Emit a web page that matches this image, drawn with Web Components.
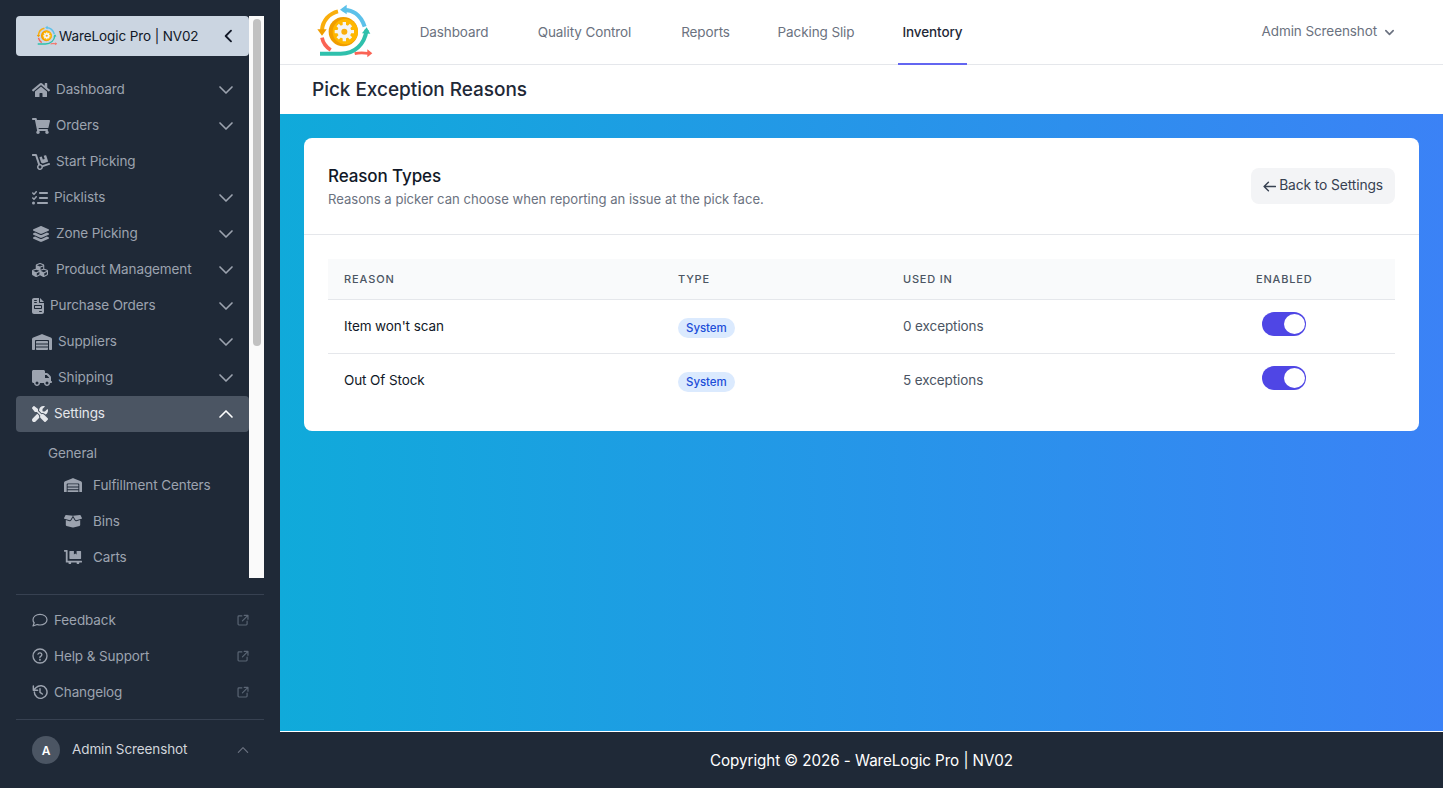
<!DOCTYPE html>
<html><head><meta charset="utf-8"><style>
html,body{margin:0;height:100%;overflow:hidden;font-family:Inter,"Liberation Sans",sans-serif;background:#fff;letter-spacing:-.1px}
body{display:flex;width:1443px;height:788px}
</style></head><body>
<wl-sidebar></wl-sidebar>
<wl-main></wl-main>
<script>
const ICON={
home:[576,512,'M280.37 148.26L96 300.11V464a16 16 0 0 0 16 16l112.06-.29a16 16 0 0 0 15.92-16V368a16 16 0 0 1 16-16h64a16 16 0 0 1 16 16v95.64a16 16 0 0 0 16 16.05L464 480a16 16 0 0 0 16-16V300L295.67 148.26a12.19 12.19 0 0 0-15.3 0zM571.6 251.47L488 182.56V44.05a12 12 0 0 0-12-12h-56a12 12 0 0 0-12 12v72.61L318.47 43a48 48 0 0 0-61 0L4.34 251.47a12 12 0 0 0-1.6 16.9l25.5 31A12 12 0 0 0 45.15 301l235.22-193.74a12.19 12.19 0 0 1 15.3 0L530.9 301a12 12 0 0 0 16.9-1.6l25.5-31a12 12 0 0 0-1.7-16.93z'],
cart:[576,512,'M528.12 301.319l47.273-208C578.806 78.301 567.391 64 551.99 64H159.208l-9.166-44.81C147.758 8.021 137.93 0 126.529 0H24C10.745 0 0 10.745 0 24v16c0 13.255 10.745 24 24 24h69.883l70.248 343.435C147.325 417.1 136 435.222 136 456c0 30.928 25.072 56 56 56s56-25.072 56-56c0-15.674-6.447-29.835-16.824-40h209.647C430.447 426.165 424 440.326 424 456c0 30.928 25.072 56 56 56s56-25.072 56-56c0-22.172-12.888-41.332-31.579-50.405l5.517-24.276c3.413-15.018-8.002-29.319-23.403-29.319H218.117l-6.545-32h293.145c11.206 0 20.92-7.754 23.403-18.681z'],
dolly:[576,512,'M294.2 277.7c18 5 34.7 13.4 49.5 24.7l161.5-53.8c8.4-2.8 12.9-11.9 10.1-20.2L454.9 47.2c-2.8-8.4-11.9-12.9-20.2-10.1l-61.1 20.4 33.1 99.4L346 177l-33.1-99.4-61.6 20.5c-8.4 2.8-12.9 11.9-10.1 20.2l53 159.4zm281 48.7L565 296c-2.8-8.4-11.9-12.9-20.2-10.1l-213.5 71.2c-17.2-22-43.6-36.4-73.5-37L158.4 21.9C154 8.8 141.8 0 128 0H16C7.2 0 0 7.2 0 16v32c0 8.8 7.2 16 16 16h88.9l92.2 276.7c-26.1 20.4-41.7 53.6-36 90.5 6.1 39.4 37.9 72.3 77.3 79.2 60.2 10.7 112.3-34.8 113.4-92.6l213.3-71.2c8.3-2.8 12.9-11.8 10.1-20.2zM256 464c-26.5 0-48-21.5-48-48s21.5-48 48-48 48 21.5 48 48-21.5 48-48 48z'],
list:[512,512,'M152.1 38.2c9.9 8.9 10.7 24 1.8 33.9l-72 80c-4.4 4.9-10.6 7.8-17.2 7.9s-12.900-2.400-17.600-7L7 113C-2.300 103.600-2.300 88.400 7 79s24.600-9.400 33.900 0l22.100 22.100 55.100-61.200c8.900-9.900 24-10.700 33.900-1.800zm0 160c9.900 8.900 10.700 24 1.800 33.900l-72 80c-4.400 4.900-10.600 7.800-17.200 7.900s-12.900-2.400-17.600-7L7 273c-9.400-9.400-9.400-24.600 0-33.900s24.600-9.400 33.900 0l22.100 22.100 55.100-61.200c8.900-9.900 24-10.700 33.900-1.800zM224 96c0-17.700 14.300-32 32-32H480c17.700 0 32 14.300 32 32s-14.300 32-32 32H256c-17.700 0-32-14.300-32-32zm0 160c0-17.700 14.300-32 32-32H480c17.700 0 32 14.300 32 32s-14.300 32-32 32H256c-17.700 0-32-14.300-32-32zM160 416c0-17.700 14.300-32 32-32H480c17.700 0 32 14.300 32 32s-14.300 32-32 32H192c-17.700 0-32-14.300-32-32zM48 368a48 48 0 1 1 0 96 48 48 0 1 1 0-96z'],
layers:[576,512,'M264.5 5.2c14.9-6.9 32.1-6.9 47 0l218.600 101c8.500 3.900 13.900 12.400 13.900 21.800s-5.400 17.900-13.900 21.800l-218.600 101c-14.900 6.900-32.100 6.900-47 0L45.900 149.800C37.400 145.800 32 137.300 32 128s5.400-17.900 13.900-21.800L264.500 5.200zM476.900 209.600l53.200 24.600c8.500 3.900 13.900 12.400 13.900 21.800s-5.400 17.900-13.900 21.800l-218.600 101c-14.900 6.900-32.100 6.900-47 0L45.900 277.800C37.400 273.800 32 265.300 32 256s5.400-17.900 13.900-21.800l53.200-24.600 152 70.200c23.400 10.800 50.400 10.800 73.800 0l152-70.200zm-152 198.200l152-70.200 53.200 24.600c8.500 3.900 13.900 12.400 13.900 21.800s-5.400 17.900-13.900 21.800l-218.600 101c-14.900 6.900-32.100 6.900-47 0L45.900 405.800C37.400 401.800 32 393.300 32 384s5.400-17.900 13.900-21.800l53.200-24.600 152 70.200c23.400 10.800 50.400 10.800 73.800 0z'],
cubes:[576,512,'M488.6 250.2L392 214V105.5c0-15-9.3-28.4-23.4-33.700l-100-37.500c-8.100-3.100-17.100-3.100-25.300 0l-100 37.500c-14.100 5.300-23.400 18.700-23.400 33.700V214l-96.600 36.200C9.300 255.500 0 268.900 0 283.900V394c0 13.600 7.700 26.100 19.900 32.200l100 50c10.100 5.100 22.100 5.100 32.200 0l103.900-52 103.900 52c10.100 5.100 22.100 5.100 32.200 0l100-50c12.200-6.100 19.900-18.600 19.900-32.200V283.900c0-15-9.300-28.400-23.400-33.700zM358 214.800l-85 31.900v-68.200l85-37v73.300zM154 104.100l102-38.200 102 38.200v.6l-102 41.400-102-41.400v-.6zm84 291.100l-85 42.500v-79.100l85-38.800v75.400zm0-112l-102 41.400-102-41.400v-.6l102-38.200 102 38.200v.6zm240 112l-85 42.500v-79.100l85-38.800v75.400zm0-112l-102 41.400-102-41.400v-.6l102-38.200 102 38.200v.6z'],
file:[384,512,'M64 0C28.7 0 0 28.7 0 64V448c0 35.3 28.7 64 64 64H320c35.3 0 64-28.7 64-64V160H256c-17.7 0-32-14.3-32-32V0H64zM256 0V128H384L256 0zM80 64h64c8.8 0 16 7.2 16 16s-7.2 16-16 16H80c-8.800 0-16-7.200-16-16s7.200-16 16-16zm0 64h64c8.800 0 16 7.200 16 16s-7.200 16-16 16H80c-8.800 0-16-7.200-16-16s7.200-16 16-16zm16 96H288c17.700 0 32 14.300 32 32v64c0 17.700-14.300 32-32 32H96c-17.700 0-32-14.300-32-32V256c0-17.700 14.300-32 32-32zm0 32v64H288V256H96zM240 416h64c8.800 0 16 7.200 16 16s-7.200 16-16 16H240c-8.800 0-16-7.200-16-16s7.200-16 16-16z'],
warehouse:[640,512,'M0 488V171.3c0-26.2 15.9-49.7 40.2-59.4L308.1 4.8c7.6-3.1 16.1-3.1 23.8 0L599.800 111.900c24.300 9.700 40.200 33.300 40.200 59.400V488c0 13.300-10.700 24-24 24H568c-13.300 0-24-10.700-24-24V224c0-17.700-14.300-32-32-32H128c-17.700 0-32 14.300-32 32V488c0 13.300-10.700 24-24 24H24c-13.300 0-24-10.700-24-24zm488 24H152c-13.300 0-24-10.700-24-24V432H512v56c0 13.300-10.700 24-24 24zM128 400V336H512v64H128zm0-96V248c0-13.300 10.700-24 24-24H488c13.300 0 24 10.700 24 24v56H128z'],
truck:[640,512,'M48 0C21.5 0 0 21.5 0 48V368c0 26.5 21.5 48 48 48H64c0 53 43 96 96 96s96-43 96-96H384c0 53 43 96 96 96s96-43 96-96h32c17.700 0 32-14.300 32-32s-14.300-32-32-32V288 256 237.300c0-17-6.700-33.300-18.700-45.300L512 114.700c-12-12-28.300-18.700-45.300-18.700H416V48c0-26.500-21.500-48-48-48H48zM416 160h50.700L544 237.300V256H416V160zM112 416a48 48 0 1 1 96 0 48 48 0 1 1 -96 0zm368-48a48 48 0 1 1 0 96 48 48 0 1 1 0-96z'],
tools:[512,512,'M78.6 5C69.1-2.4 55.6-1.5 47 7L7 47c-8.5 8.500-9.400 22-2.100 31.600l80 104c4.500 5.900 11.600 9.400 19 9.400h54.100l109 109c-14.700 29-10 65.400 14.300 89.600l112 112c12.500 12.500 32.800 12.500 45.300 0l64-64c12.500-12.500 12.500-32.800 0-45.300l-112-112c-24.200-24.200-60.600-29-89.600-14.300l-109-109V104c0-7.500-3.500-14.500-9.400-19L78.600 5zM19.900 396.100C7.200 408.800 0 426.100 0 444.100C0 481.600 30.400 512 67.900 512c18 0 35.300-7.200 48-19.900L233.700 374.300c-7.800-20.900-9-43.600-3.500-65.100L169.400 248.500 19.900 396.100zM512 144c0-10.500-1.100-20.700-3.200-30.500c-2.400-11.200-16.100-14.100-24.200-6l-63.900 63.900c-3 3-7.100 4.700-11.300 4.700H352c-8.800 0-16-7.200-16-16V102.600c0-4.200 1.700-8.300 4.700-11.300l63.900-63.900c8.100-8.100 5.200-21.800-6-24.200C388.700 1.100 378.500 0 368 0C288.500 0 224 64.500 224 144l0 .8 85.300 85.300c36-9.100 75.800 .5 104 28.700L429 274.500c49-23 83-72.800 83-130.500z'],
box:[640,512,'M425.7 256c-16.9 0-32.8-9-41.4-23.4L320 126l-64.200 106.600c-8.700 14.500-24.600 23.500-41.500 23.500-4.500 0-9-.6-13.300-1.900L64 215v178c0 14.700 10 27.500 24.200 31l216.200 54.100c10.200 2.500 20.900 2.500 31 0L551.800 424c14.200-3.600 24.200-16.400 24.200-31V215l-137 39.100c-4.300 1.300-8.800 1.900-13.300 1.900zm212.600-112.200L586.800 41c-3.100-6.200-9.800-9.800-16.700-8.900L320 64l91.700 152.100c3.800 6.300 11.400 9.300 18.500 7.300l197.900-56.500c9.900-2.900 14.700-13.900 10.200-23.100zM53.200 41L1.700 143.800c-4.600 9.200.3 20.200 10.100 23l197.900 56.500c7.100 2 14.700-1 18.500-7.300L320 64 69.800 32.100c-6.900-.8-13.500 2.700-16.600 8.900z'],
flatbed:[640,512,'M208 320h384c8.800 0 16-7.200 16-16V48c0-8.800-7.200-16-16-16H448v128l-48-32-48 32V32H208c-8.800 0-16 7.200-16 16v256c0 8.800 7.200 16 16 16zm416 64H128V16c0-8.800-7.200-16-16-16H16C7.200 0 0 7.200 0 16v32c0 8.800 7.200 16 16 16h48v368c0 8.800 7.200 16 16 16h82.900c-1.800 5-2.900 10.400-2.900 16 0 26.500 21.500 48 48 48s48-21.500 48-48c0-5.600-1.200-11-2.900-16H451c-1.800 5-2.900 10.400-2.900 16 0 26.500 21.500 48 48 48s48-21.500 48-48c0-5.600-1.200-11-2.900-16H624c8.800 0 16-7.200 16-16v-32c0-8.800-7.200-16-16-16z']
};
const svg=(n,h=16,w)=>{const[a,b,d]=ICON[n];const W=w||a/b*h;return `<svg width="${W}" height="${h}" viewBox="0 0 ${a} ${b}" preserveAspectRatio="xMinYMid meet" fill="currentColor" style="display:block;flex:none"><path d="${d}"/></svg>`};
const chev=(dir,s,sw)=>`<svg width="${s}" height="${s}" viewBox="0 0 24 24" fill="none" stroke="currentColor" stroke-width="${sw}" stroke-linecap="round" stroke-linejoin="round" style="display:block;flex:none"><path d="${dir=='up'?'M4 16l8-8 8 8':dir=='left'?'M15 4l-8 8 8 8':'M4 8l8 8 8-8'}"/></svg>`;
const stroke=(d,s=16,sw=2,vb=24)=>`<svg width="${s}" height="${s}" viewBox="0 0 ${vb} ${vb}" fill="none" stroke="currentColor" stroke-width="${sw}" stroke-linecap="round" stroke-linejoin="round" style="display:block;flex:none">${d}</svg>`;
const ext=stroke('<path d="M10 5H5a1.5 1.5 0 0 0-1.5 1.5v12.5A1.5 1.5 0 0 0 5 20.500h12.500a1.500 1.500 0 0 0 1.500-1.500v-5M14 4h6.500v6.500M20 4.500l-9 9"/>',14,2);

class WlLogo extends HTMLElement{connectedCallback(){const w=+this.getAttribute('w')||70;const s=this.attachShadow({mode:'open'});
s.innerHTML=`<style>:host{display:block;flex:none}svg{display:block}</style><svg width="${w}" height="${w*64/70}" viewBox="0 0 210 192" fill="none">
<path d="M98 30c28-3 54 14 66 50" stroke="#5cc1ea" stroke-width="12"/><path d="M110 14L90 29l20 14z" fill="#5cc1ea"/>
<path d="M84 34C58 40 38 62 36 90" stroke="#f9ae0c" stroke-width="12"/><path d="M22 88h28l-14 19z" fill="#f09d00"/>
<path d="M36 113c3 16 12 28 26 37" stroke="#fa6354" stroke-width="11"/>
<path d="M30 161h62c42 0 72-28 78-72" stroke="#2fc0ac" stroke-width="12"/><path d="M156 100l14-18 11 19z" fill="#2fc0ac"/>
<path d="M134 161c12-3 26-3 40-1" stroke="#fa6354" stroke-width="8"/><path d="M172 148l15 12-15 12z" fill="#fa6354"/>
<circle cx="100" cy="95" r="44" fill="#f09d00"/><circle cx="106" cy="95" r="38" fill="#ffb700"/>
<g fill="#f4f4f4"><circle cx="103" cy="95" r="21"/><g stroke="#f4f4f4" stroke-width="10"><path d="M103 66v58M74 95h58M83 75l40 40M123 75l-40 40"/></g></g><circle cx="103" cy="95" r="9" fill="#f9ae0c"/></svg>`}}
customElements.define('wl-logo',WlLogo);

class SideItem extends HTMLElement{connectedCallback(){const s=this.attachShadow({mode:'open'});
const ic=this.getAttribute('icon'),c=this.getAttribute('chev'),a=this.hasAttribute('active');
s.innerHTML=`<style>:host{display:flex;align-items:center;height:36px;padding:0 14px 0 16px;box-sizing:border-box;border-radius:4px;gap:6px;font-size:13.500px;color:${a?'#e5e7eb':'#9ca3af'};background:${a?'#4b5563':'none'};flex:none}
span{flex:1;white-space:nowrap;padding-bottom:2px}</style>${svg(ic)}<span><slot></slot></span>${c?`<div style="color:${a?'#fff':'#9ca3af'}">${chev(c,18,2.2)}</div>`:''}`}}
customElements.define('side-item',SideItem);

class SubItem extends HTMLElement{connectedCallback(){const s=this.attachShadow({mode:'open'});
s.innerHTML=`<style>:host{display:flex;align-items:center;height:36px;padding-left:48px;gap:11px;font-size:13.500px;color:#9ca3af;flex:none}
</style>${svg(this.getAttribute('icon'),14.4,18)}<span><slot></slot></span>`}}
customElements.define('sub-item',SubItem);

class LinkItem extends HTMLElement{connectedCallback(){const s=this.attachShadow({mode:'open'});const k=this.getAttribute('svg');
const ic=k==='chat'?stroke('<path d="M12 3.500c5.800 0 10.500 3.500 10.500 8s-4.700 8-10.500 8c-1.500 0-3-.3-4.300-.8L1.500 21l1.800-4.800C2 15 1.500 13.300 1.500 11.500c0-4.500 4.700-8 10.500-8z"/>',16,1.8):k==='help'?stroke('<circle cx="12" cy="12" r="10.500"/><path d="M9 9.200a3 3 0 0 1 5.800 1c0 2-3 2.600-3 4"/><circle cx="11.900" cy="17.600" r=".5"/>',16,2):stroke('<path d="M3.500 12a9.500 9.500 0 1 0 2.800-6.700L2 9.500M2 3v6.500h6.500M12 7v5.500l3.500 2.500"/>',16,2.200);
s.innerHTML=`<style>:host{display:flex;align-items:center;height:36px;padding:0 14px 0 16px;gap:6px;font-size:13.500px;color:#9ca3af;flex:none}
span{flex:1}.e{color:#5b6675}</style>${ic}<span><slot></slot></span><div class="e">${ext}</div>`}}
customElements.define('link-item',LinkItem);

class WlSidebar extends HTMLElement{connectedCallback(){const s=this.attachShadow({mode:'open'});
s.innerHTML=`<style>:host{display:flex;flex-direction:column;width:280px;height:788px;background:#1f2937;flex:none;box-sizing:border-box;padding:16px 16px 0}
.scroll{display:flex;height:562px;flex:none}.col{width:233px;height:562px;overflow:hidden;display:flex;flex-direction:column}
.track{width:15px;background:#fafafa;padding:3px 3px 0 4px;box-sizing:border-box}.thumb{width:8px;height:327px;background:#c1c1c1;border-radius:4px}
.brand{height:40px;flex:none;display:flex;align-items:center;background:#cbd5e1;border-radius:4px;padding:0 12px 0 18px;margin-bottom:16px;font-size:13.500px;color:#111827;white-space:nowrap}
.brand span{flex:1;margin-left:-1px;padding-bottom:1px}
.gen{height:28px;padding:7px 0 0 32px;font-size:13.500px;color:#9ca3af;display:flex;align-items:center;flex:none}
hr{border:0;height:1px;background:#374151;margin:0;flex:none}.h1{margin-top:16px}.links{padding:7px 0 9px;}
.user{display:flex;align-items:center;padding:16px 14px 16px 16px;font-size:13.500px;color:#d1d5db;gap:12px}
.av{width:28px;height:28px;border-radius:50%;background:#4b5563;color:#fff;display:flex;align-items:center;justify-content:center;font-size:12px;font-weight:600}
.user span{flex:1;padding-bottom:2px}.uc{color:#6b7280}
</style>
<div class="scroll"><div class="col">
<div class="brand"><wl-logo w="26"></wl-logo><span>WareLogic Pro | NV02</span>${chev('left',16,2.8)}</div>
<side-item icon="home" chev="down">Dashboard</side-item>
<side-item icon="cart" chev="down">Orders</side-item>
<side-item icon="dolly">Start Picking</side-item>
<side-item icon="list" chev="down">Picklists</side-item>
<side-item icon="layers" chev="down">Zone Picking</side-item>
<side-item icon="cubes" chev="down">Product Management</side-item>
<side-item icon="file" chev="down">Purchase Orders</side-item>
<side-item icon="warehouse" chev="down">Suppliers</side-item>
<side-item icon="truck" chev="down">Shipping</side-item>
<side-item icon="tools" chev="up" active>Settings</side-item>
<div class="gen">General</div>
<sub-item icon="warehouse">Fulfillment Centers</sub-item>
<sub-item icon="box">Bins</sub-item>
<sub-item icon="flatbed">Carts</sub-item>
</div><div class="track"><div class="thumb"></div></div></div>
<hr class="h1"><div class="links"><link-item svg="chat">Feedback</link-item><link-item svg="help">Help &amp; Support</link-item><link-item svg="hist">Changelog</link-item></div><hr>
<div class="user"><div class="av">A</div><span>Admin Screenshot</span><div class="uc">${chev('up',14,2)}</div></div>`}}
customElements.define('wl-sidebar',WlSidebar);

class NavLink extends HTMLElement{connectedCallback(){const s=this.attachShadow({mode:'open'});const a=this.hasAttribute('active');
s.innerHTML=`<style>:host{display:flex;align-items:center;justify-content:center;width:${this.getAttribute('w')}px;height:65px;box-sizing:border-box;font-size:13.500px;color:${a?'#1f2937':'#6b7280'};font-weight:${a?500:400};border-bottom:2px solid ${a?'#6366f1':'transparent'};white-space:nowrap}</style><slot></slot>`}}
customElements.define('nav-link',NavLink);

class RowToggle extends HTMLElement{connectedCallback(){this.attachShadow({mode:'open'}).innerHTML=`<style>:host{display:flex;width:44px;height:24px;box-sizing:border-box;background:#4f46e5;border-radius:12px;padding:2px 1px;justify-content:flex-end}i{display:block;width:21px;height:20px;background:#fff;border-radius:50%}</style><i></i>`}}
customElements.define('row-toggle',RowToggle);

class SysBadge extends HTMLElement{connectedCallback(){this.attachShadow({mode:'open'}).innerHTML=`<style>:host{display:inline-flex;align-items:center;height:20px;padding:0 8px;border-radius:10px;background:#dbeafe;color:#1d4ed8;font-size:11.500px;font-weight:500;letter-spacing:-.05px}</style><slot></slot>`}}
customElements.define('sys-badge',SysBadge);

class ReasonTable extends HTMLElement{connectedCallback(){const r=(n,c)=>`<div class="tr"><div class="c1">${n}</div><div class="c2"><sys-badge>System</sys-badge></div><div class="c3">${c}</div><div class="c4"><div class="w"><row-toggle></row-toggle></div></div></div>`;
this.attachShadow({mode:'open'}).innerHTML=`<style>:host{display:block;padding:24px 24px 24px}
.tr{display:grid;grid-template-columns:350px 225px 337px 1fr;align-items:center;height:54px;border-bottom:1px solid #e5e7eb;box-sizing:border-box}
.tr:last-child{border-bottom:0;height:53px}
.h{height:41px;background:#f9fafb;font-size:11px;font-weight:500;letter-spacing:.8px;color:#4b5563;text-transform:uppercase}
.c1{padding-left:16px;font-size:13.500px;color:#111827;padding-bottom:2px}.h .c1{font-size:11px;color:#4b5563;padding:0 0 0 16px;letter-spacing:.9px}.c2{line-height:0;padding-top:2px}.h .c2{line-height:normal;padding-top:0}.c3{font-size:13.500px;color:#4b5563;padding-bottom:2px}.h .c3{font-size:11px;padding:0}.c4{padding-left:16px}
.w{width:56px;display:flex;justify-content:center;padding-bottom:6px}
</style><div class="tr h"><div class="c1">Reason</div><div class="c2">Type</div><div class="c3">Used In</div><div class="c4">Enabled</div></div>${r("Item won't scan","0 exceptions")}${r("Out Of Stock","5 exceptions")}`}}
customElements.define('reason-table',ReasonTable);

class WlCard extends HTMLElement{connectedCallback(){this.attachShadow({mode:'open'}).innerHTML=`<style>:host{display:block;background:#fff;border-radius:8px}
.top{display:flex;align-items:center;justify-content:space-between;height:97px;box-sizing:border-box;padding:0 24px;border-bottom:1px solid #e5e7eb}
h2{margin:0;font-size:17px;font-weight:500;color:#111827;line-height:24px}p{margin:1px 0 0;font-size:13.100px;color:#6b7280;line-height:20px;letter-spacing:-.01px}
.btn{display:flex;align-items:center;gap:3px;height:36px;padding:0 12px;background:#f3f4f6;border-radius:8px;font-size:13.800px;color:#374151;white-space:nowrap}
.btn span{padding-bottom:2px}
</style><div class="top"><div><h2>Reason Types</h2><p>Reasons a picker can choose when reporting an issue at the pick face.</p></div><div class="btn">${stroke('<path d="M23 12H2M10 4l-8 8 8 8"/>',13,2.600)}<span>Back to Settings</span></div></div><reason-table></reason-table>`}}
customElements.define('wl-card',WlCard);

class WlMain extends HTMLElement{connectedCallback(){this.attachShadow({mode:'open'}).innerHTML=`<style>:host{display:flex;flex-direction:column;flex:1;min-width:0;height:788px}
nav{display:flex;align-items:center;height:65px;box-sizing:border-box;border-bottom:1px solid #e5e7eb;padding:0 48px 0 30px;flex:none}
.links{display:flex;gap:40px;margin-left:36px;flex:1;align-self:flex-start}
.user{display:flex;align-items:center;gap:7px;font-size:13.500px;color:#6b7280;white-space:nowrap}
.user span{padding-bottom:2px}
.title{height:49px;flex:none;display:flex;align-items:center;padding:0 32px;font-size:19px;font-weight:500;color:#1f2937;box-sizing:border-box;padding-bottom:1px;letter-spacing:-.04px}
.grad{flex:1;padding:24px;background:linear-gradient(to right,#10aada,#3b82f6)}
footer{flex:none;height:57px;box-sizing:border-box;border-top:1px solid #fff;background:#1f2937;color:#fff;display:flex;align-items:center;justify-content:center;font-size:15.200px;letter-spacing:-.06px}
</style><nav><wl-logo></wl-logo><div class="links"><nav-link w="76">Dashboard</nav-link><nav-link w="105">Quality Control</nav-link><nav-link w="57">Reports</nav-link><nav-link w="84">Packing Slip</nav-link><nav-link w="69" active>Inventory</nav-link></div><div class="user"><span>Admin Screenshot</span>${chev('down',11,3.600)}</div></nav>
<div class="title">Pick Exception Reasons</div><div class="grad"><wl-card></wl-card></div><footer>Copyright © 2026 - WareLogic Pro | NV02</footer>`}}
customElements.define('wl-main',WlMain);
</script></body></html>
